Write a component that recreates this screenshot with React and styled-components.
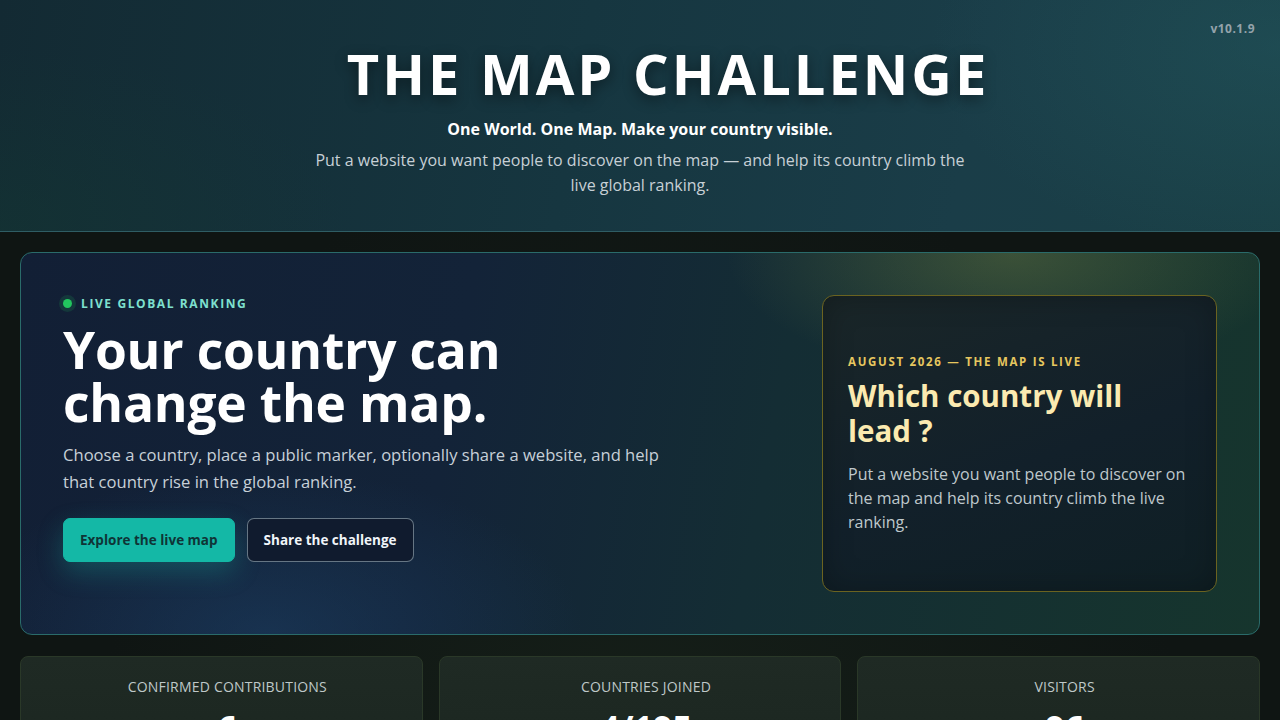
import React from 'react';
import styled, { createGlobalStyle } from 'styled-components';

const GlobalStyle = createGlobalStyle`
	* { box-sizing: border-box; }
	html, body {
		margin: 0;
		padding: 0;
		background: #0f1513;
		font-family: "Open Sans", "Noto Sans", sans-serif;
		color: #f1f5f9;
	}
`;

const stats = [
	{ label: "Confirmed contributions", value: "6" },
	{ label: "Countries joined", value: "4/195" },
	{ label: "Visitors", value: "96" },
];

function App() {
	return (
		<Page>
			<GlobalStyle />
			<Header>
				<Version>v10.1.9</Version>
				<Title>THE MAP CHALLENGE</Title>
				<Tagline>One World. One Map. Make your country visible.</Tagline>
				<Intro>
					Put a website you want people to discover on the map — and help its country climb the live global ranking.
				</Intro>
			</Header>

			<Main>
				<Hero>
					<HeroLeft>
						<Badge>
							<Dot />
							LIVE GLOBAL RANKING
						</Badge>
						<HeroTitle>Your country can change the map.</HeroTitle>
						<HeroText>
							Choose a country, place a public marker, optionally share a website, and help that country rise in the global ranking.
						</HeroText>
						<Actions>
							<Button primary>Explore the live map</Button>
							<Button>Share the challenge</Button>
						</Actions>
					</HeroLeft>

					<Teaser>
						<TeaserLabel>AUGUST 2026 — THE MAP IS LIVE</TeaserLabel>
						<TeaserTitle>Which country will lead ?</TeaserTitle>
						<TeaserText>
							Put a website you want people to discover on the map and help its country climb the live ranking.
						</TeaserText>
					</Teaser>
				</Hero>

				<Stats>
					{ stats.map( s => (
						<StatCard key={ s.label }>
							<StatLabel>{ s.label }</StatLabel>
							<StatValue>{ s.value }</StatValue>
						</StatCard>
					) ) }
				</Stats>
			</Main>
		</Page>
	);
}

const Page = styled.div`
	min-height: 100vh;
	background:
		radial-gradient(ellipse at 50% 100%, rgba(40, 60, 40, 0.25), transparent 60%),
		#0f1513;
`;
const Header = styled.header`
	position: relative;
	height: 232px;
	padding-top: 40px;
	text-align: center;
	background:
		radial-gradient(ellipse 500px 300px at 100% 20%, rgba(40, 100, 110, 0.3), transparent 70%),
		radial-gradient(ellipse 500px 260px at 0% 100%, rgba(20, 60, 50, 0.35), transparent 70%),
		linear-gradient(100deg, #132a33 0%, #163640 45%, #1a3d48 75%, #1a4046 100%);
	border-bottom: 1px solid #2f5d64;
`;
const Version = styled.div`
	position: absolute;
	top: 20px;
	right: 25px;
	font-size: 12px;
	font-weight: 700;
	color: #94a3ab;
	letter-spacing: 0.5px;
`;
const Title = styled.h1`
	margin: 0;
	padding-left: 56px;
	font-size: 56px;
	line-height: 66px;
	font-weight: 700;
	letter-spacing: 3px;
	color: #ffffff;
	text-shadow: 0 4px 14px rgba(0, 0, 0, 0.45);
`;
const Tagline = styled.p`
	margin: 12px 0 0;
	font-size: 16px;
	font-weight: 700;
	color: #ffffff;
`;
const Intro = styled.p`
	margin: 8px auto 0;
	max-width: 670px;
	font-size: 16px;
	line-height: 25px;
	color: #c7d0d6;
`;
const Main = styled.main`
	padding: 20px 20px 0;
	display: flex;
	flex-direction: column;
	gap: 21px;
`;
const Hero = styled.section`
	display: grid;
	grid-template-columns: 1fr 395px;
	gap: 48px;
	padding: 42px;
	border: 1px solid #2a6b6a;
	border-radius: 12px;
	background:
		radial-gradient(ellipse 380px 170px at 80% 0%, rgba(140, 150, 70, 0.32), transparent 75%),
		radial-gradient(ellipse 420px 220px at 20% 100%, rgba(30, 70, 110, 0.45), transparent 75%),
		linear-gradient(100deg, #121f35 0%, #132338 35%, #142d34 60%, #16352d 100%);
`;
const HeroLeft = styled.div`
	display: flex;
	flex-direction: column;
	align-items: flex-start;
`;
const Badge = styled.div`
	display: flex;
	align-items: center;
	gap: 9px;
	font-size: 12px;
	font-weight: 700;
	letter-spacing: 1.6px;
	color: #7ee0cf;
`;
const Dot = styled.span`
	width: 9px;
	height: 9px;
	border-radius: 50%;
	background: #22c55e;
	box-shadow: 0 0 0 4px rgba(34, 197, 94, 0.15);
`;
const HeroTitle = styled.h2`
	margin: 11px 0 0;
	max-width: 470px;
	font-size: 51.5px;
	line-height: 53px;
	font-weight: 700;
	color: #ffffff;
	letter-spacing: -0.2px;
`;
const HeroText = styled.p`
	margin: 12px 0 0;
	max-width: 620px;
	font-size: 16.6px;
	line-height: 27px;
	color: #c7d0d8;
`;
const Actions = styled.div`
	display: flex;
	gap: 12px;
	margin-top: 23px;
`;
const Button = styled.button`
	height: 44px;
	padding: 0 16px;
	border-radius: 7px;
	font-family: inherit;
	font-size: 13.5px;
	font-weight: 700;
	cursor: pointer;
	border: 1px solid ${ p => p.primary ? "#14b8a6" : "rgba(160, 180, 190, 0.6)" };
	background: ${ p => p.primary ? "#14b8a6" : "#101b2e" };
	color: ${ p => p.primary ? "#0f3436" : "#f1f5f9" };
	box-shadow: ${ p => p.primary ? "0 10px 26px rgba(20, 184, 166, 0.28)" : "none" };
`;
const Teaser = styled.aside`
	min-height: 297px;
	display: flex;
	flex-direction: column;
	justify-content: center;
	padding: 26px 25px;
	border: 1px solid #6b6320;
	border-radius: 12px;
	background: linear-gradient(160deg, #1a2628 0%, #12202a 55%, #0f1f24 100%);
	box-shadow: inset 0 0 30px rgba(0, 0, 0, 0.25);
`;
const TeaserLabel = styled.div`
	font-size: 11.5px;
	font-weight: 700;
	letter-spacing: 1.7px;
	color: #e7c75f;
`;
const TeaserTitle = styled.h3`
	margin: 9px 0 0;
	max-width: 300px;
	font-size: 29.5px;
	line-height: 35px;
	font-weight: 700;
	color: #fbeab0;
`;
const TeaserText = styled.p`
	margin: 14px 0 0;
	font-size: 16px;
	line-height: 24px;
	color: #bfc8cc;
`;
const Stats = styled.section`
	display: grid;
	grid-template-columns: repeat(3, 1fr);
	gap: 16px;
`;
const StatCard = styled.div`
	height: 120px;
	padding: 20px 0 0 12px;
	text-align: center;
	border: 1px solid #2a3828;
	border-radius: 8px;
	background: linear-gradient(180deg, #1f2a24 0%, #1b2620 100%);
`;
const StatLabel = styled.div`
	font-size: 14px;
	font-weight: 400;
	text-transform: uppercase;
	color: #bfc8c8;
	letter-spacing: 0.2px;
`;
const StatValue = styled.div`
	margin-top: 8px;
	font-size: 34px;
	font-weight: 700;
	color: #ffffff;
`;

export default App;
